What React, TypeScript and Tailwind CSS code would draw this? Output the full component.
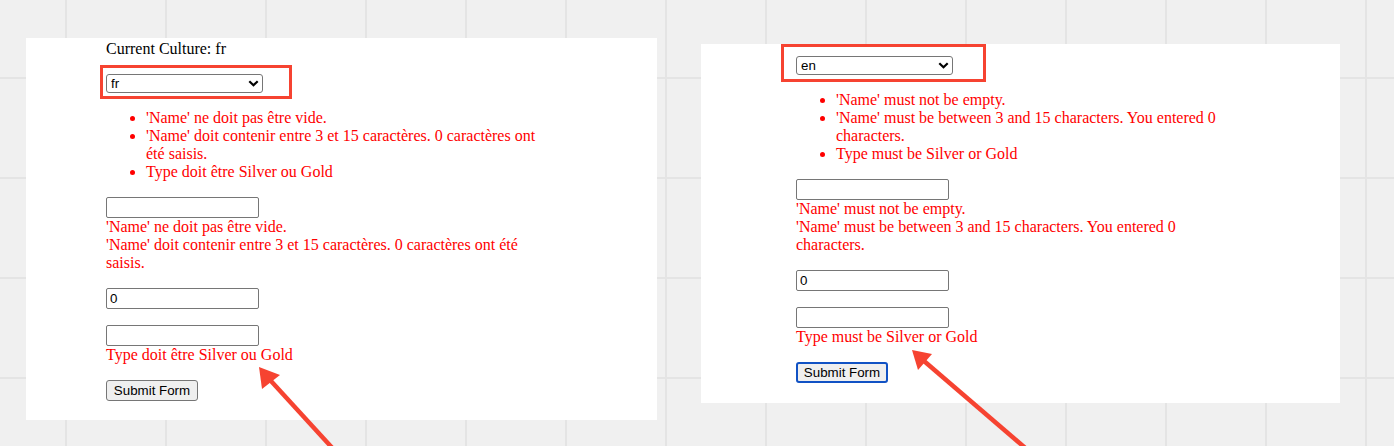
import React from "react";

type Panel = {
  culture?: string;
  lang: string;
  summary: string[];
  nameErrors: string[];
  typeError: string;
  focused: boolean;
};

const panels: Panel[] = [
  {
    culture: "fr",
    lang: "fr",
    summary: [
      "'Name' ne doit pas être vide.",
      "'Name' doit contenir entre 3 et 15 caractères. 0 caractères ont été saisis.",
      "Type doit être Silver ou Gold",
    ],
    nameErrors: [
      "'Name' ne doit pas être vide.",
      "'Name' doit contenir entre 3 et 15 caractères. 0 caractères ont été saisis.",
    ],
    typeError: "Type doit être Silver ou Gold",
    focused: false,
  },
  {
    lang: "en",
    summary: [
      "'Name' must not be empty.",
      "'Name' must be between 3 and 15 characters. You entered 0 characters.",
      "Type must be Silver or Gold",
    ],
    nameErrors: [
      "'Name' must not be empty.",
      "'Name' must be between 3 and 15 characters. You entered 0 characters.",
    ],
    typeError: "Type must be Silver or Gold",
    focused: true,
  },
];

function Chevron() {
  return (
    <svg
      width="11"
      height="7"
      viewBox="0 0 11 7"
      className="absolute right-[4px] top-[6px] pointer-events-none"
    >
      <path d="M1.3 1.2 L5.5 5.2 L9.7 1.2" fill="none" stroke="#000" strokeWidth="2.2" />
    </svg>
  );
}

function CultureSelect({ value }: { value: string }) {
  return (
    <div className="relative w-[157px] h-[19px]">
      <select
        defaultValue={value}
        className="appearance-none w-full h-full border border-[#767676] rounded-[3px] bg-white pl-[4px] text-[13.33px] leading-[17px] text-black font-['Liberation_Sans',Arial,sans-serif] outline-none"
      >
        <option value="en">en</option>
        <option value="fr">fr</option>
      </select>
      <Chevron />
    </div>
  );
}

function TextBox({ value = "" }: { value?: string }) {
  return (
    <input
      type="text"
      defaultValue={value}
      className="block w-[153px] h-[21px] border border-[#767676] rounded-[2px] bg-white px-[3px] text-[13.33px] text-black font-['Liberation_Sans',Arial,sans-serif] outline-none"
    />
  );
}

function FormPanel({ panel, left }: { panel: Panel; left: boolean }) {
  return (
    <div
      className={
        left
          ? "bg-white w-[631px] h-[382px] ml-[26px] mt-[38px] pl-[80px] pt-[2px] shrink-0"
          : "bg-white w-[639px] h-[359px] ml-[44px] mt-[44px] pl-[95px] shrink-0"
      }
    >
      <div className="w-[450px] font-['Liberation_Serif','Times_New_Roman',serif] text-[16px] leading-[18px]">
        {panel.culture && (
          <div className="text-black">Current Culture: {panel.culture}</div>
        )}

        {/* highlighted culture picker */}
        <div
          className={
            left
              ? "inline-block border-[3px] border-[#f64331] -ml-[6px] mt-[7px] pt-[6px] pl-[3px] pr-[26px] pb-[3px]"
              : "inline-block border-[3px] border-[#f64331] -ml-[15px] pt-[9px] pl-[12px] pr-[30px] pb-[4px]"
          }
        >
          <CultureSelect value={panel.lang} />
        </div>

        <ul
          className={
            left
              ? "list-disc pl-10 mt-[10px] text-[#ff0000]"
              : "list-disc pl-10 mt-[9px] text-[#ff0000]"
          }
        >
          {panel.summary.map((s) => (
            <li key={s}>{s}</li>
          ))}
        </ul>

        <div className="mt-4">
          <TextBox />
          {panel.nameErrors.map((e) => (
            <div key={e} className="text-[#ff0000]">
              {e}
            </div>
          ))}
        </div>

        <div className="mt-4">
          <TextBox value="0" />
        </div>

        <div className="mt-4">
          <TextBox />
          <div className="text-[#ff0000]">{panel.typeError}</div>
        </div>

        <button
          className={
            panel.focused
              ? "mt-4 block w-[92px] h-[21px] bg-[#efefef] border-2 border-[#1152c4] rounded-[3px] text-[13.33px] leading-[15px] text-black font-['Liberation_Sans',Arial,sans-serif]"
              : "mt-4 block w-[92px] h-[21px] bg-[#efefef] border border-[#767676] rounded-[3px] text-[13.33px] leading-[15px] text-black font-['Liberation_Sans',Arial,sans-serif]"
          }
        >
          Submit Form
        </button>
      </div>
    </div>
  );
}

export default function App() {
  return (
    <div className="relative w-[1394px] h-[446px] overflow-hidden bg-[#f0f0f0] bg-[linear-gradient(to_right,#e4e4e4_2px,transparent_2px),linear-gradient(to_bottom,#e4e4e4_2px,transparent_2px)] bg-[length:100px_100px] bg-[position:65px_77px]">
      <div className="flex items-start">
        <FormPanel panel={panels[0]} left />
        <FormPanel panel={panels[1]} left={false} />
      </div>

      {/* annotation arrows */}
      <svg
        width="1394"
        height="446"
        viewBox="0 0 1394 446"
        className="absolute left-0 top-0 pointer-events-none"
      >
        <line x1="271" y1="381" x2="336" y2="452" stroke="#f64331" strokeWidth="4.5" />
        <polygon points="259,367 280,375 262,389" fill="#f64331" />
        <line x1="924" y1="361" x2="1030" y2="452" stroke="#f64331" strokeWidth="4.5" />
        <polygon points="912,350 932,354 918,370" fill="#f64331" />
      </svg>
    </div>
  );
}
